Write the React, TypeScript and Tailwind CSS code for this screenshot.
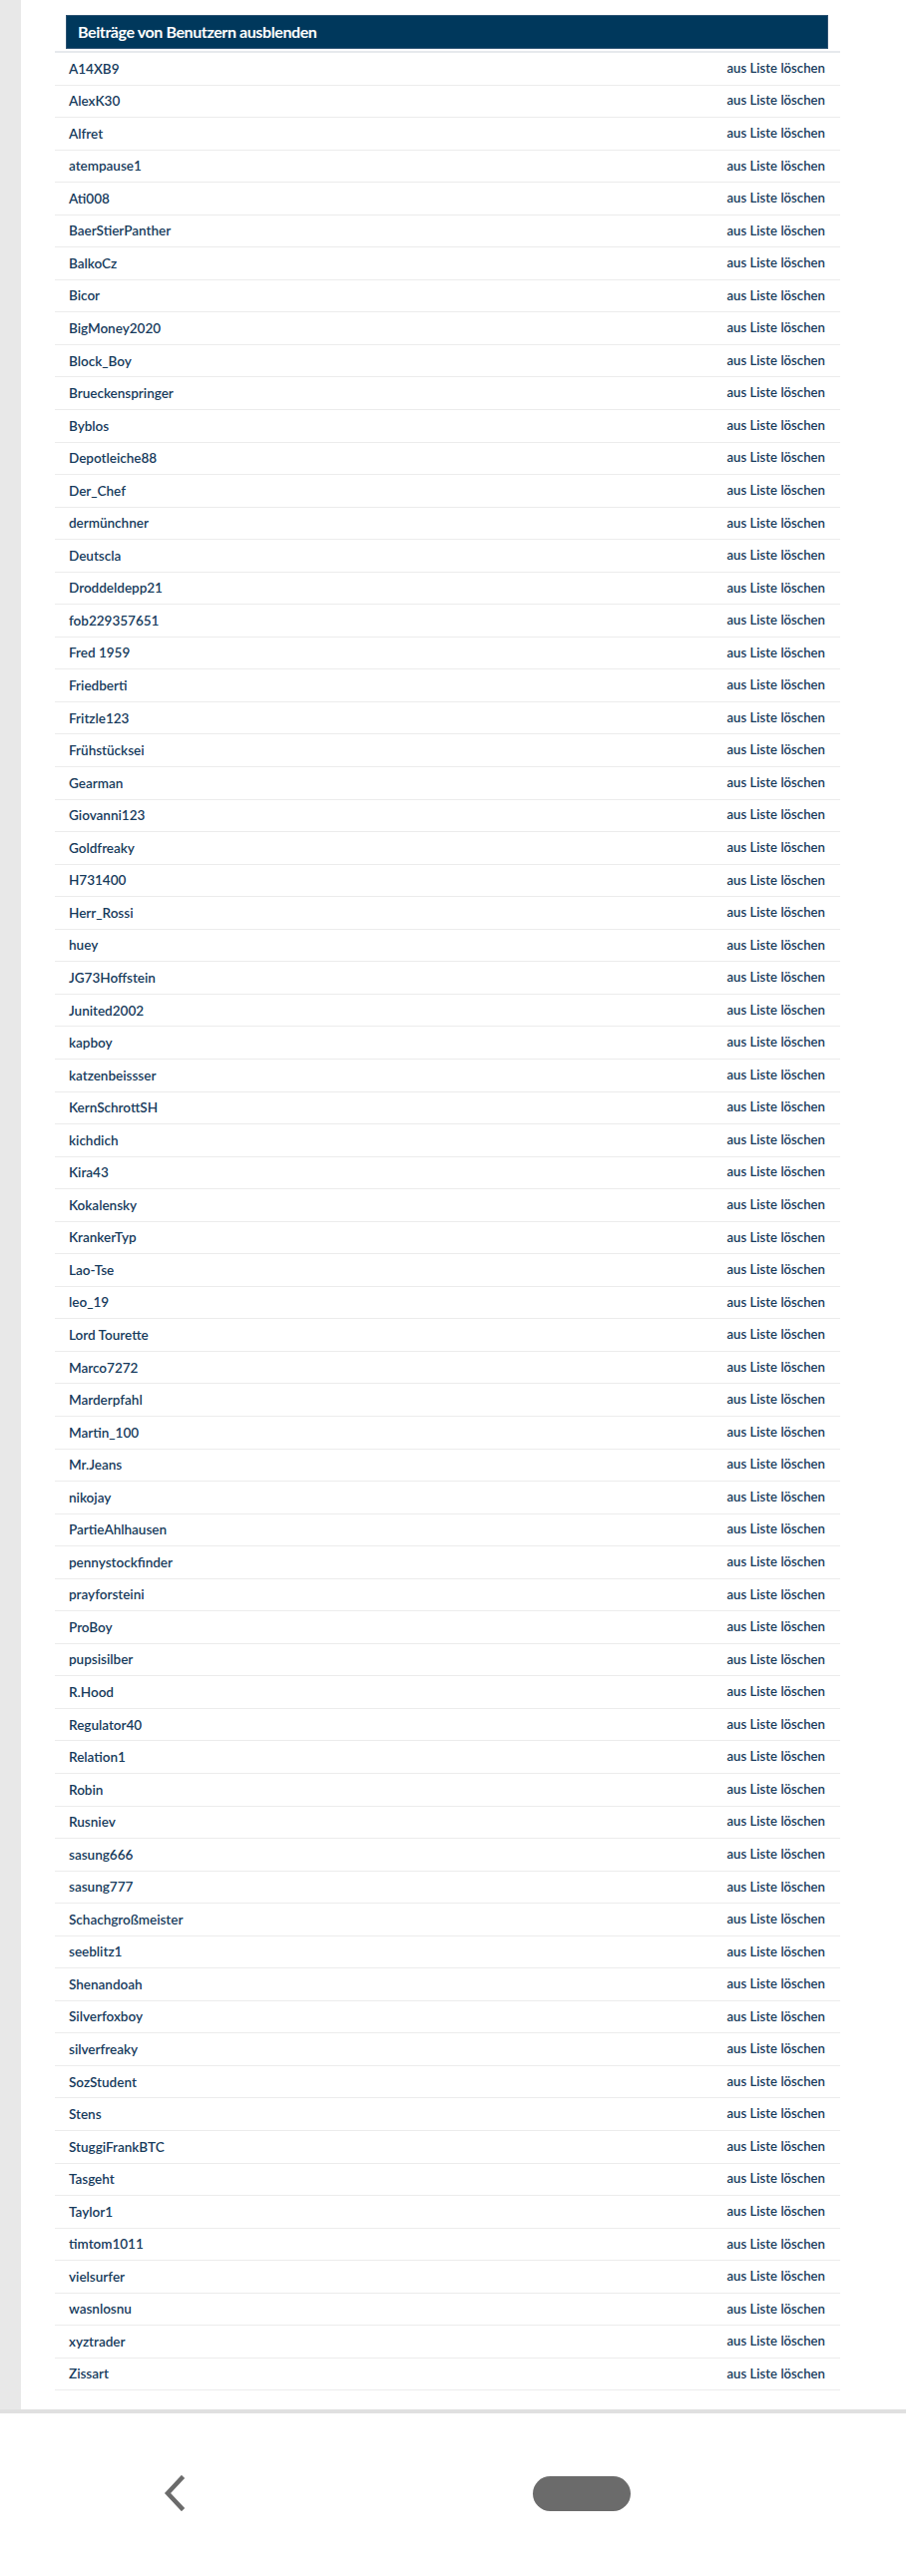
import React from 'react'

const USERS: string[] = [
  'A14XB9', 'AlexK30', 'Alfret', 'atempause1', 'Ati008', 'BaerStierPanther', 'BalkoCz', 'Bicor',
  'BigMoney2020', 'Block_Boy', 'Brueckenspringer', 'Byblos', 'Depotleiche88', 'Der_Chef',
  'dermünchner', 'Deutscla', 'Droddeldepp21', 'fob229357651', 'Fred 1959', 'Friedberti',
  'Fritzle123', 'Frühstücksei', 'Gearman', 'Giovanni123', 'Goldfreaky', 'H731400', 'Herr_Rossi',
  'huey', 'JG73Hoffstein', 'Junited2002', 'kapboy', 'katzenbeissser', 'KernSchrottSH', 'kichdich',
  'Kira43', 'Kokalensky', 'KrankerTyp', 'Lao-Tse', 'leo_19', 'Lord Tourette', 'Marco7272',
  'Marderpfahl', 'Martin_100', 'Mr.Jeans', 'nikojay', 'PartieAhlhausen', 'pennystockfinder',
  'prayforsteini', 'ProBoy', 'pupsisilber', 'R.Hood', 'Regulator40', 'Relation1', 'Robin',
  'Rusniev', 'sasung666', 'sasung777', 'Schachgroßmeister', 'seeblitz1', 'Shenandoah',
  'Silverfoxboy', 'silverfreaky', 'SozStudent', 'Stens', 'StuggiFrankBTC', 'Tasgeht', 'Taylor1',
  'timtom1011', 'vielsurfer', 'wasnlosnu', 'xyztrader', 'Zissart'
]

function UserRow({ name }: { name: string }) {
  return (
    <div className="flex items-center justify-between h-[32.56px] pl-[14px] pr-[15px] border-b-[1.5px] border-[#ececec]">
      <span className="text-[13.5px] font-semibold text-[#173b5c]">{name}</span>
      <a href="#" className="text-[13.2px] font-semibold text-[#173b5c]">aus Liste löschen</a>
    </div>
  )
}

export default function App() {
  return (
    <div className="w-[908px] min-h-[2582px] bg-white flex flex-col font-['Lato','Liberation_Sans',sans-serif]">
      {/* page content */}
      <div className="flex">
        <div className="w-[21px] bg-[#e8e8e8]" />
        <div className="flex-1 bg-white pt-[15px] pb-[19px]">
          <div className="ml-[45px] w-[764px] h-[34px] bg-[#00385c] border border-[#2d5373] flex items-center px-[11px]">
            <h2 className="text-[16px] tracking-[-0.4px] font-bold text-white">Beiträge von Benutzern ausblenden</h2>
          </div>
          <div className="ml-[34px] w-[787px] mt-[2px] border-t-2 border-[#e6e9ed]">
            {USERS.map((u) => (
              <UserRow key={u} name={u} />
            ))}
          </div>
        </div>
      </div>

      <div className="h-[4px] bg-[#e0e0e0]" />

      {/* android nav bar */}
      <div className="flex-1 bg-white">
        <div className="flex items-center h-[160px]">
          <div className="w-[348px] flex justify-center">
            <svg width="24" height="36" viewBox="0 0 24 36" fill="none">
              <path d="M20 3 L6 18 L20 33" stroke="#6b6b6b" strokeWidth="4.5" strokeLinecap="square" />
            </svg>
          </div>
          <div className="ml-[186px] w-[98px] h-[35px] rounded-full bg-[#6b6b6b]" />
        </div>
      </div>
    </div>
  )
}
